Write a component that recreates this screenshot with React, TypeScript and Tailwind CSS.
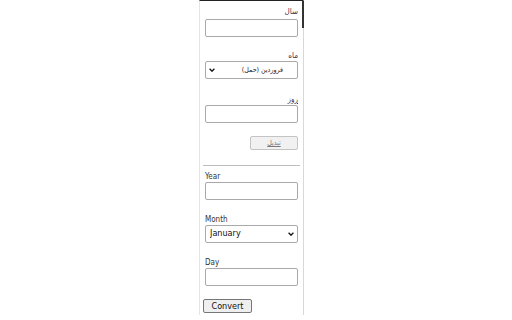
import React from 'react';

const font = { fontFamily: '"DejaVu Sans Condensed", "Liberation Sans", sans-serif' };

const inputCls = 'block w-full h-[18px] border border-[#a9a9a9] rounded-[2px] bg-white outline-none';
const labelCls = 'block h-[10px] leading-[10px] text-[8px]';

const Chevron = ({ className }: { className: string }) => (
  <svg viewBox="0 0 10 6" className={className} fill="none" stroke="#111" strokeWidth="2.2">
    <path d="M1 1l4 4 4-4" />
  </svg>
);

export default function App() {
  return (
    <div className="w-full h-[320px] bg-white" style={font}>
      <div className="relative ml-[199px] w-[105px] h-[315px] border-t border-[#222] border-l border-l-[#e4e4e4] border-r border-r-[#d8d8d8] px-[5px] pt-[6px]">
        <div className="absolute right-[-1px] top-0 w-[2px] h-[27px] bg-[#333]" />

        {/* Persian form */}
        <div dir="rtl" className="flex flex-col">
          <label className={`${labelCls} text-[#3d3350]`}>سال</label>
          <input type="text" className={`${inputCls} mt-[2px]`} />

          <label className={`${labelCls} text-[#3d3350] mt-[14px]`}>ماه</label>
          <div className="relative">
            <select className={`${inputCls} appearance-none text-[7px] text-[#222] pr-[14px] pl-[14px]`}>
              <option>فروردین (حمل)</option>
              <option>اردیبهشت (ثور)</option>
              <option>خرداد (جوزا)</option>
            </select>
            <Chevron className="absolute left-[4px] top-[7px] w-[6px] h-[4px] pointer-events-none" />
          </div>

          <label className={`${labelCls} text-[#3d3350] mt-[16px] underline`}>روز</label>
          <input type="text" className={inputCls} />

          <div className="flex justify-start mt-[13px]">
            <button
              disabled
              className="w-[48px] h-[14px] border border-[#c4c4c4] rounded-[2px] bg-[#f1f1f1] text-[7px] leading-[12px] text-[#7a7a7a] underline"
            >
              تبدیل
            </button>
          </div>
        </div>

        <hr className="mt-[15px] border-t border-[#bdbdbd] mx-[-2px]" />

        {/* English form */}
        <div className="flex flex-col">
          <label className={`${labelCls} text-[#333] mt-[6px]`}>Year</label>
          <input type="text" className={inputCls} />

          <label className={`${labelCls} text-[#333] mt-[15px]`}>Month</label>
          <div className="relative">
            <select className={`${inputCls} appearance-none text-[9px] text-[#111] pl-[4px] pr-[14px]`}>
              <option>January</option>
              <option>February</option>
              <option>March</option>
            </select>
            <Chevron className="absolute right-[4px] top-[7px] w-[6px] h-[4px] pointer-events-none" />
          </div>

          <label className={`${labelCls} text-[#333] mt-[15px]`}>Day</label>
          <input type="text" className={inputCls} />

          <div className="flex mt-[13px]">
            <button className="w-[49px] h-[14px] ml-[-2px] border border-[#767676] rounded-[2px] bg-[#efefef] text-[9px] leading-[12px] text-[#111]">
              Convert
            </button>
          </div>
        </div>
      </div>
    </div>
  );
}
